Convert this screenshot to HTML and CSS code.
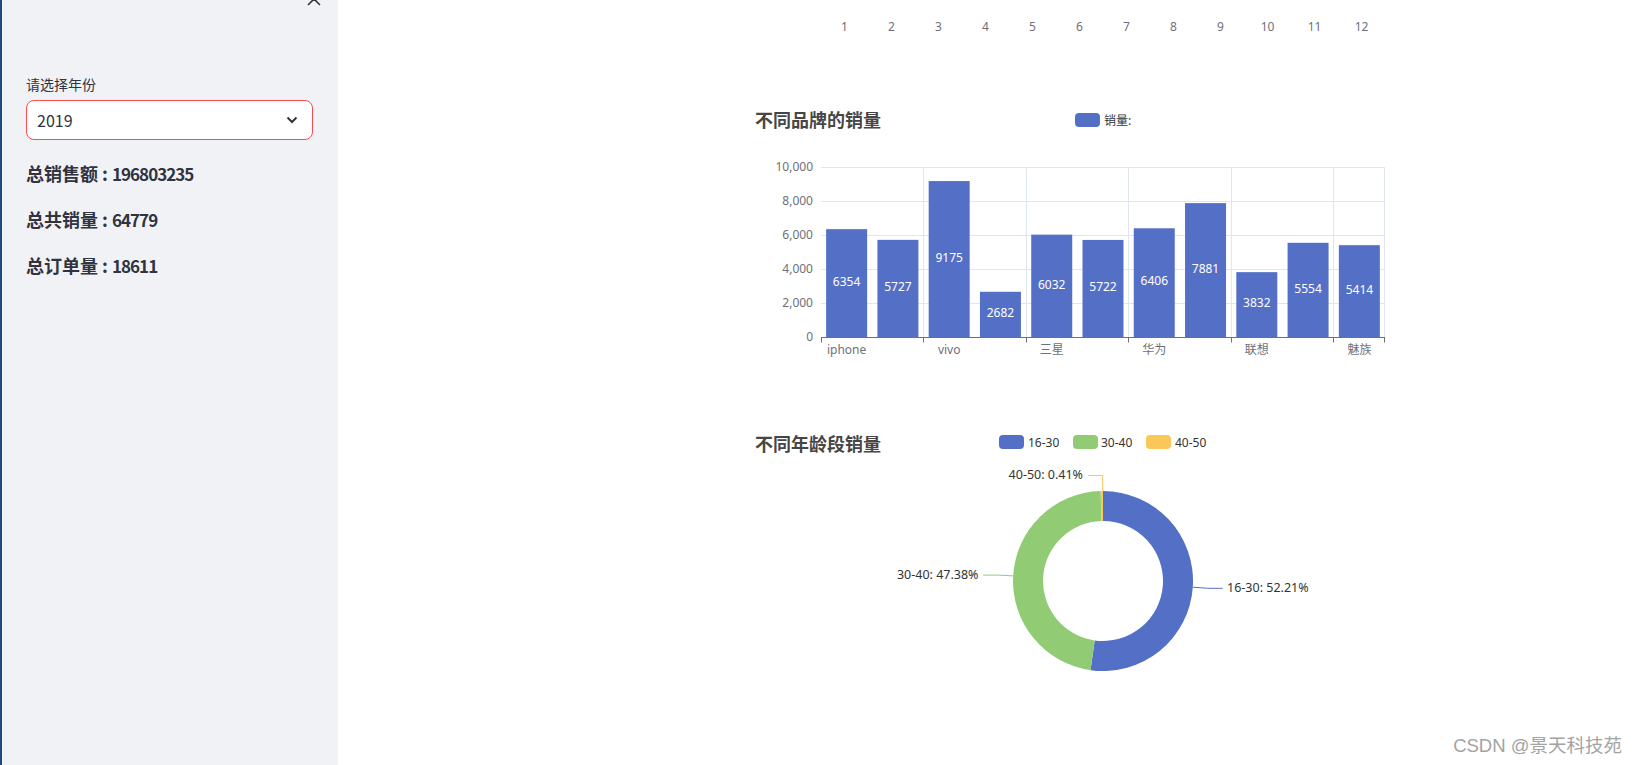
FILE: index.html
```html
<!DOCTYPE html>
<html lang="zh-CN">
<head>
<meta charset="utf-8">
<title>销售数据</title>
<link rel="stylesheet" href="styles.css">
</head>
<body>
<div class="app">
  <aside class="sidebar">
    <div class="sidebar-top">
      <button class="close-btn" aria-label="关闭">
        <svg width="16" height="16" viewBox="0 0 16 16"><path d="M2 2 L14 14 M14 2 L2 14" /></svg>
      </button>
    </div>
    <label class="field-label">请选择年份</label>
    <div class="select">
      <span class="select-value">2019</span>
      <svg class="chevron" width="12" height="12" viewBox="0 0 12 12"><path d="M1.5 3.5 L6 8 L10.5 3.5" /></svg>
    </div>
    <p class="stat">总销售额 : <span class="num">196803235</span></p>
    <p class="stat">总共销量 : <span class="num">64779</span></p>
    <p class="stat">总订单量 : <span class="num">18611</span></p>
  </aside>

  <main class="main">
    <div class="chart chart-partial">
      <svg width="706" height="40" viewBox="0 0 706 40">
        <g class="axis-label" text-anchor="middle">
          <text x="94.5" y="26">1</text>
          <text x="141.5" y="26">2</text>
          <text x="188.5" y="26">3</text>
          <text x="235.5" y="26">4</text>
          <text x="282.5" y="26">5</text>
          <text x="329.5" y="26">6</text>
          <text x="376.5" y="26">7</text>
          <text x="423.5" y="26">8</text>
          <text x="470.5" y="26">9</text>
          <text x="517.5" y="26">10</text>
          <text x="564.5" y="26">11</text>
          <text x="611.5" y="26">12</text>
        </g>
      </svg>
    </div>

    <section class="chart chart-bar">
      <svg width="706" height="290" viewBox="0 0 706 290">
        <text class="chart-title" x="5" y="12">不同品牌的销量</text>
        <rect class="bar" x="325" y="6" width="25" height="14" rx="4" />
        <text class="legend-text" x="354" y="13">销量:</text>

        <g class="grid">
          <line x1="71" y1="60.5" x2="635" y2="60.5" />
          <line x1="71" y1="94.5" x2="635" y2="94.5" />
          <line x1="71" y1="128.5" x2="635" y2="128.5" />
          <line x1="71" y1="162.5" x2="635" y2="162.5" />
          <line x1="71" y1="196.5" x2="635" y2="196.5" />
          <line x1="173.5" y1="60" x2="173.5" y2="230" />
          <line x1="276.5" y1="60" x2="276.5" y2="230" />
          <line x1="378.5" y1="60" x2="378.5" y2="230" />
          <line x1="481.5" y1="60" x2="481.5" y2="230" />
          <line x1="583.5" y1="60" x2="583.5" y2="230" />
          <line x1="634.5" y1="60" x2="634.5" y2="230" />
        </g>

        <g class="axis-label" text-anchor="end">
          <text x="63" y="59">10,000</text>
          <text x="63" y="93">8,000</text>
          <text x="63" y="127">6,000</text>
          <text x="63" y="161">4,000</text>
          <text x="63" y="195">2,000</text>
          <text x="63" y="229">0</text>
        </g>

        <g class="bars">
          <rect class="bar" x="76.13" y="122.16" width="41" height="108.34" />
          <rect class="bar" x="127.40" y="132.85" width="41" height="97.65" />
          <rect class="bar" x="178.67" y="74.07" width="41" height="156.43" />
          <rect class="bar" x="229.94" y="184.77" width="41" height="45.73" />
          <rect class="bar" x="281.22" y="127.65" width="41" height="102.85" />
          <rect class="bar" x="332.49" y="132.94" width="41" height="97.56" />
          <rect class="bar" x="383.76" y="121.28" width="41" height="109.22" />
          <rect class="bar" x="435.04" y="96.13" width="41" height="134.37" />
          <rect class="bar" x="486.31" y="165.16" width="41" height="65.34" />
          <rect class="bar" x="537.58" y="135.80" width="41" height="94.70" />
          <rect class="bar" x="588.85" y="138.19" width="41" height="92.31" />
        </g>

        <g class="bar-label" text-anchor="middle">
          <text x="96.6" y="174.3">6354</text>
          <text x="147.9" y="179.7">5727</text>
          <text x="199.2" y="150.3">9175</text>
          <text x="250.4" y="205.6">2682</text>
          <text x="301.7" y="177.1">6032</text>
          <text x="353.0" y="179.7">5722</text>
          <text x="404.3" y="173.9">6406</text>
          <text x="455.5" y="161.3">7881</text>
          <text x="506.8" y="195.8">3832</text>
          <text x="558.1" y="181.2">5554</text>
          <text x="609.4" y="182.3">5414</text>
        </g>

        <g class="axis">
          <line x1="71" y1="230.5" x2="635" y2="230.5" />
          <line x1="71.5" y1="230.5" x2="71.5" y2="235.5" />
          <line x1="173.5" y1="230.5" x2="173.5" y2="235.5" />
          <line x1="276.5" y1="230.5" x2="276.5" y2="235.5" />
          <line x1="378.5" y1="230.5" x2="378.5" y2="235.5" />
          <line x1="481.5" y1="230.5" x2="481.5" y2="235.5" />
          <line x1="583.5" y1="230.5" x2="583.5" y2="235.5" />
          <line x1="634.5" y1="230.5" x2="634.5" y2="235.5" />
        </g>

        <g class="axis-label" text-anchor="middle">
          <text x="96.6" y="242">iphone</text>
          <text x="199.2" y="242">vivo</text>
          <text x="301.7" y="242">三星</text>
          <text x="404.3" y="242">华为</text>
          <text x="506.8" y="242">联想</text>
          <text x="609.4" y="242">魅族</text>
        </g>
      </svg>
    </section>

    <section class="chart chart-pie">
      <svg width="706" height="300" viewBox="0 0 706 300">
        <text class="chart-title" x="5" y="13">不同年龄段销量</text>
        <rect class="c-blue" x="249" y="5" width="25" height="14" rx="4" />
        <text class="legend-text" x="278" y="12">16-30</text>
        <rect class="c-green" x="323" y="5" width="25" height="14" rx="4" />
        <text class="legend-text" x="351" y="12">30-40</text>
        <rect class="c-yellow" x="396" y="5" width="25" height="14" rx="4" />
        <text class="legend-text" x="425" y="12">40-50</text>

        <path class="c-blue" d="M353 61 A90 90 0 1 1 340.54 240.13 L344.69 210.42 A60 60 0 1 0 353 91 Z" />
        <path class="c-green" d="M340.54 240.13 A90 90 0 0 1 350.68 61.03 L351.45 91.02 A60 60 0 0 0 344.69 210.42 Z" />
        <path class="c-yellow" d="M350.68 61.03 A90 90 0 0 1 353 61 L353 91 A60 60 0 0 0 351.45 91.02 Z" />

        <polyline class="ll-blue" points="442.8,157.2 457.7,158.3 472.7,158.3" />
        <polyline class="ll-green" points="263.1,145.9 248.2,145.1 233.2,145.1" />
        <polyline class="ll-yellow" points="352.7,61 352.7,45.5 337.8,45.5" />

        <text class="pie-label" x="477" y="157">16-30: 52.21%</text>
        <text class="pie-label" x="228.5" y="144" text-anchor="end">30-40: 47.38%</text>
        <text class="pie-label" x="333" y="44.5" text-anchor="end">40-50: 0.41%</text>
      </svg>
    </section>

    <div class="watermark">CSDN @景天科技苑</div>
  </main>
</div>
</body>
</html>
```

FILE: styles.css
```css
* { box-sizing: border-box; }

html, body {
  margin: 0;
  padding: 0;
  height: 765px;
  overflow: hidden;
  background: #ffffff;
}

.app {
  display: flex;
  height: 765px;
  font-family: "Noto Sans CJK SC", "Noto Sans", sans-serif;
  color: #31333f;
}

/* ---------- sidebar ---------- */
.sidebar {
  width: 338px;
  flex: none;
  background: #f0f2f6;
  border-left: 2px solid #1a4b7e;
  padding: 0 25px 0 24px;
  display: flex;
  flex-direction: column;
}

.sidebar-top {
  display: flex;
  justify-content: flex-end;
  margin-top: -9px;
  margin-right: -9px;
  height: 16px;
}

.close-btn {
  border: 0;
  padding: 0;
  background: transparent;
  width: 16px;
  height: 16px;
  display: block;
}
.close-btn svg { display: block; }
.close-btn path {
  stroke: #31333f;
  stroke-width: 1.6;
  fill: none;
}

.field-label {
  margin-top: 67px;
  font-size: 14px;
  line-height: 20px;
  height: 20px;
  color: #31333f;
}

.select {
  margin-top: 6px;
  height: 40px;
  background: #ffffff;
  border: 1px solid #ff4b4b;
  border-radius: 8px;
  display: flex;
  align-items: center;
  justify-content: space-between;
  padding: 0 14px 0 10px;
}

.select-value {
  font-size: 16px;
  line-height: 20px;
  color: #31333f;
}

.chevron { display: block; }
.chevron path {
  fill: none;
  stroke: #31333f;
  stroke-width: 2;
}

.stat {
  margin: 0 0 18px;
  height: 28px;
  font-size: 18px;
  line-height: 28px;
  font-weight: 700;
  color: #31333f;
  white-space: nowrap;
}
.select + .stat { margin-top: 19px; }

.stat .num {
  font-size: 17px;
  line-height: 28px;
  font-weight: 600;
  letter-spacing: -1px;
}

/* ---------- main ---------- */
.main {
  flex: 1;
  position: relative;
  background: #ffffff;
  padding-left: 412px;
  display: flex;
  flex-direction: column;
  align-items: flex-start;
  overflow: hidden;
}

.chart svg { display: block; overflow: visible; }

.chart-partial { height: 40px; }
.chart-bar { margin-top: 67px; height: 290px; }
.chart-pie { margin-top: 33px; height: 300px; }

.chart text {
  font-family: "Noto Sans", "Noto Sans CJK SC", sans-serif;
  dominant-baseline: central;
}

.chart .chart-title {
  font-family: "Noto Sans CJK SC", sans-serif;
  font-size: 18px;
  font-weight: 700;
  fill: #464646;
}

.legend-text {
  font-size: 12px;
  fill: #333333;
}

.axis-label text {
  font-size: 12px;
  fill: #6e7079;
}

.grid line {
  stroke: #e0e6f1;
  stroke-width: 1;
}

.axis line {
  stroke: #6e7079;
  stroke-width: 1;
}

.bar { fill: #5470c6; }

.bar-label text {
  font-size: 12px;
  fill: #ffffff;
}

.c-blue { fill: #5470c6; }
.c-green { fill: #91cc75; }
.c-yellow { fill: #fac858; }

.ll-blue, .ll-green, .ll-yellow { fill: none; stroke-width: 1; }
.ll-blue { stroke: #5470c6; }
.ll-green { stroke: #91cc75; }
.ll-yellow { stroke: #fac858; }

.pie-label {
  font-size: 12.5px;
  fill: #333333;
}

.watermark {
  position: absolute;
  right: 16px;
  bottom: 7px;
  font-family: "Liberation Sans", "Noto Sans CJK SC", sans-serif;
  font-size: 18.5px;
  line-height: 24px;
  color: #a3a3a3;
  text-shadow: 0 0 1px #ffffff;
  white-space: nowrap;
}
```
